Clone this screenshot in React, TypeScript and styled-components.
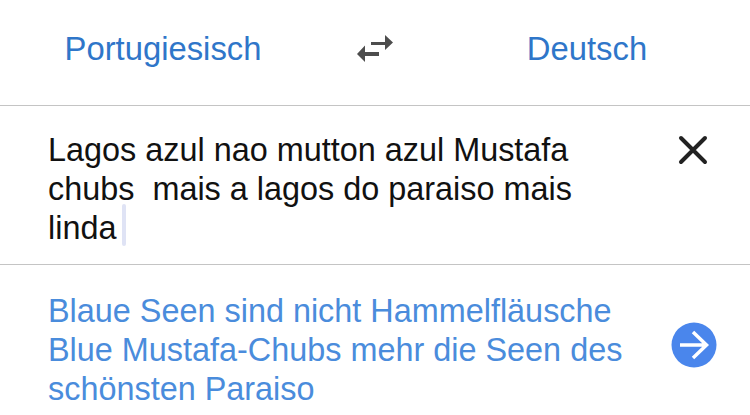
import React from "react";
import styled, { createGlobalStyle } from "styled-components";

const GlobalStyle = createGlobalStyle`
  * {
    box-sizing: border-box;
  }

  html, body {
    margin: 0;
    padding: 0;
    background: #fff;
  }

  body {
    font-family: "Liberation Sans", Arial, sans-serif;
  }
`;

const Page = styled.main`
  width: 750px;
  height: 415px;
  overflow: hidden;
  background: #fff;
`;

const LangBar = styled.header`
  height: 106px;
  display: grid;
  grid-template-columns: 326px 98px 1fr;
  align-items: center;
  padding-bottom: 7px;
  border-bottom: 1px solid #c4c4c4;
`;

const LangName = styled.span`
  font-size: 32.8px;
  color: #2f76c9;
  text-align: center;
`;

const SwapButton = styled.span`
  display: flex;
  justify-content: center;
`;

const Section = styled.section`
  display: flex;
  align-items: flex-start;
  justify-content: space-between;
  padding: 25px 0 0 48px;
`;

const SourceSection = styled(Section)`
  height: 159px;
  border-bottom: 1px solid #c4c4c4;
`;

const ResultSection = styled(Section)`
  padding-top: 27px;
`;

const SourceText = styled.p`
  margin: 0;
  width: 600px;
  font-size: 32.4px;
  line-height: 39px;
  color: #111;
  white-space: pre-wrap;
`;

const ResultText = styled(SourceText)`
  color: #4a8cdc;
`;

const Caret = styled.span`
  display: inline-block;
  width: 4px;
  height: 42px;
  margin: -8px 0 -4px 6px;
  vertical-align: -3px;
  border-radius: 2px;
  background: #dfe3f5;
`;

const CloseButton = styled.span`
  display: block;
  margin: 4px 42px 0 0;
  line-height: 0;
`;

const GoButton = styled.span`
  display: block;
  margin: 30px 33px 0 0;
  line-height: 0;
`;

function SwapIcon() {
  return (
    <svg width="38" height="30" viewBox="0 0 38 30">
      <path d="M15 8h14V1l8 7.500-8 7.500V11H15z" fill="#4d4d4d" />
      <path d="M23 18H9v-6.500L1 20l8 8v-6h14z" fill="#4d4d4d" />
    </svg>
  );
}

function CloseIcon() {
  return (
    <svg width="30" height="30" viewBox="0 0 30 30">
      <path d="M3 3l24 24M27 3L3 27" stroke="#222" strokeWidth="4" strokeLinecap="round" fill="none" />
    </svg>
  );
}

function GoIcon() {
  return (
    <svg width="46" height="46" viewBox="0 0 46 46">
      <circle cx="23" cy="23" r="22.500" fill="#4a86ec" />
      <path d="M9 23h26M22 10l13.500 13L22 36" stroke="#fff" strokeWidth="3.500" fill="none" />
    </svg>
  );
}

export default function App() {
  return (
    <Page>
      <GlobalStyle />
      <LangBar>
        <LangName>Portugiesisch</LangName>
        <SwapButton>
          <SwapIcon />
        </SwapButton>
        <LangName>Deutsch</LangName>
      </LangBar>
      <SourceSection>
        <SourceText>
          Lagos azul nao mutton azul Mustafa{"\n"}chubs  mais a lagos do paraiso mais{"\n"}linda
          <Caret />
        </SourceText>
        <CloseButton>
          <CloseIcon />
        </CloseButton>
      </SourceSection>
      <ResultSection>
        <ResultText>
          Blaue Seen sind nicht Hammelfläusche{"\n"}Blue Mustafa-Chubs mehr die Seen des{"\n"}schönsten Paraiso
        </ResultText>
        <GoButton>
          <GoIcon />
        </GoButton>
      </ResultSection>
    </Page>
  );
}
